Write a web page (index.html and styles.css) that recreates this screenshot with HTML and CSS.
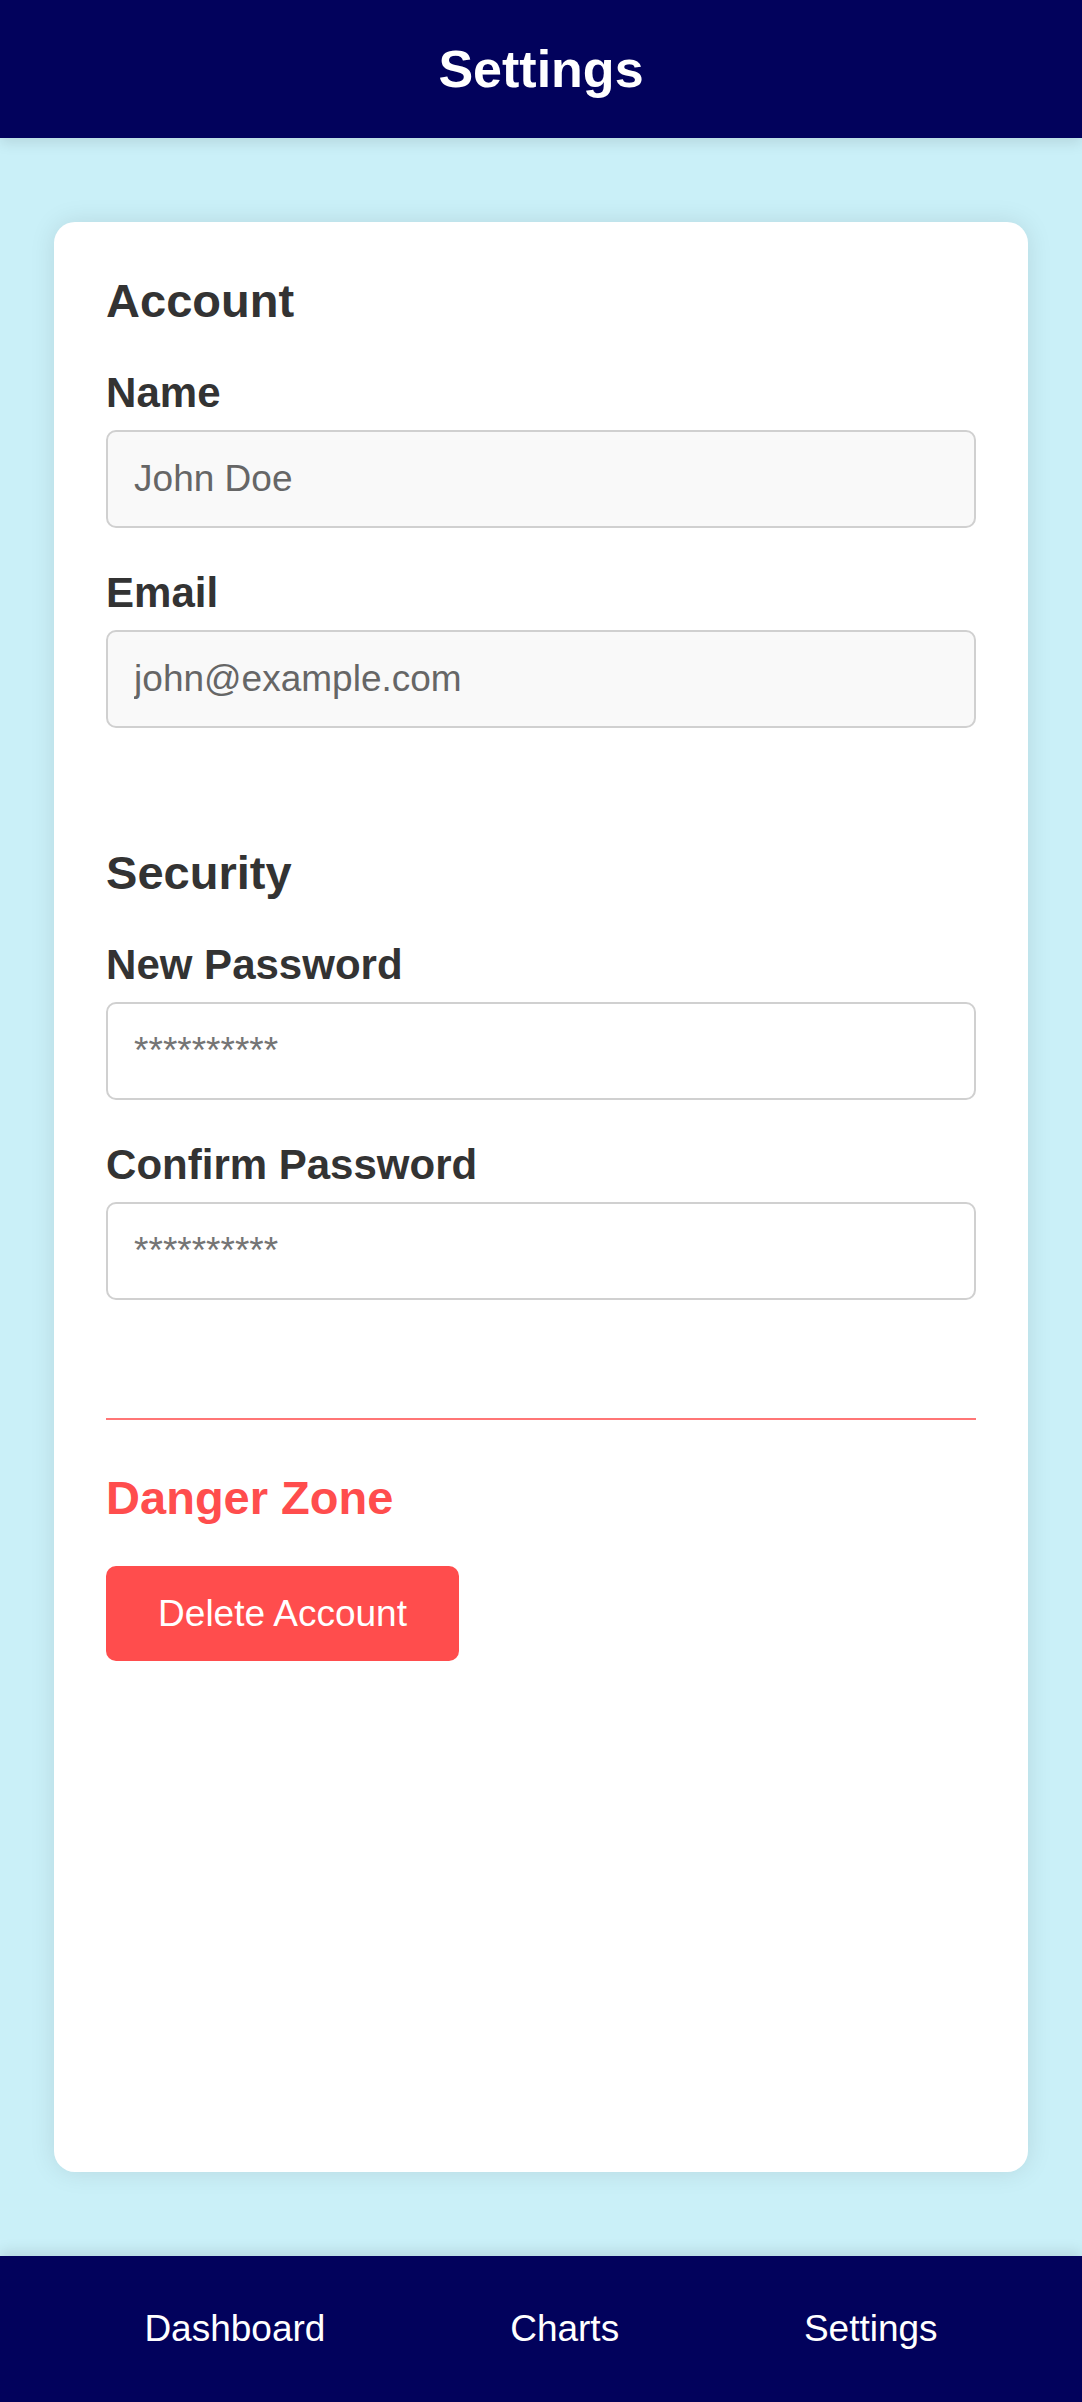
FILE: index.html
```html
<!DOCTYPE html>
<html lang="en">
<head>
  <meta charset="utf-8">
  <meta name="viewport" content="width=device-width, initial-scale=1">
  <title>Settings</title>
  <link rel="stylesheet" href="styles.css">
</head>
<body>
  <header class="header">
    <h1 class="header-title">Settings</h1>
  </header>
  <main class="card">
    <section class="section">
      <h2 class="section-title">Account</h2>
      <div class="field">
        <label class="label" for="name">Name</label>
        <input class="input input-readonly" id="name" type="text" value="John Doe" readonly>
      </div>
      <div class="field">
        <label class="label" for="email">Email</label>
        <input class="input input-readonly" id="email" type="email" value="john@example.com" readonly>
      </div>
    </section>
    <section class="section">
      <h2 class="section-title">Security</h2>
      <div class="field">
        <label class="label" for="new-password">New Password</label>
        <input class="input" id="new-password" type="password" placeholder="**********">
      </div>
      <div class="field">
        <label class="label" for="confirm-password">Confirm Password</label>
        <input class="input" id="confirm-password" type="password" placeholder="**********">
      </div>
    </section>
    <section class="section section-danger">
      <h2 class="section-title">Danger Zone</h2>
      <button class="button-danger" type="button">Delete Account</button>
    </section>
  </main>
  <nav class="nav">
    <a class="nav-link" href="#dashboard">Dashboard</a>
    <a class="nav-link" href="#charts">Charts</a>
    <a class="nav-link" href="#settings">Settings</a>
  </nav>
</body>
</html>
```
FILE: styles.css
```css
* {
  box-sizing: border-box;
  margin: 0;
}

body {
  display: flex;
  flex-direction: column;
  min-height: 100vh;
  background: #caf0f8;
  color: #333;
  font-family: Arial, "Liberation Sans", sans-serif;
}

.header {
  padding: 40px;
  background: #02025c;
  color: #fff;
  text-align: center;
  box-shadow: 0 5px 13px rgba(0, 0, 0, 0.1);
}

.header-title {
  font-size: 52px;
  line-height: 58px;
}

.card {
  display: flex;
  flex: 1;
  flex-direction: column;
  gap: 118px;
  margin: 84px 5%;
  padding: 52px;
  background: #fff;
  border-radius: 21px;
  box-shadow: 0 0 26px rgba(0, 0, 0, 0.1);
}

.section {
  display: flex;
  flex-direction: column;
  gap: 41px;
}

.section-title {
  font-size: 47px;
  line-height: 54px;
}

.field {
  display: flex;
  flex-direction: column;
  gap: 13px;
}

.label {
  font-size: 42px;
  font-weight: bold;
  line-height: 48px;
}

.input {
  width: 100%;
  height: 98px;
  padding: 26px;
  border: 2px solid #d0d0d0;
  border-radius: 10px;
  background: #fff;
  color: #333;
  font-family: inherit;
  font-size: 37px;
  line-height: 42px;
}

.input::placeholder {
  color: #757575;
}

.input-readonly {
  background: #f9f9f9;
  color: #666;
}

.section-danger {
  align-items: flex-start;
  padding-top: 51px;
  border-top: 2px solid #ff7676;
}

.section-danger .section-title {
  color: #ff4d4d;
}

.button-danger {
  padding: 26px 52px;
  border: 0;
  border-radius: 10px;
  background: #ff4d4d;
  color: #fff;
  font-family: inherit;
  font-size: 37px;
  line-height: 43px;
}

.nav {
  display: flex;
  justify-content: space-around;
  padding: 52px;
  background: #02025c;
  box-shadow: 0 -5px 13px rgba(0, 0, 0, 0.1);
}

.nav-link {
  color: #fff;
  font-size: 37px;
  line-height: 42px;
  text-decoration: none;
}
```
